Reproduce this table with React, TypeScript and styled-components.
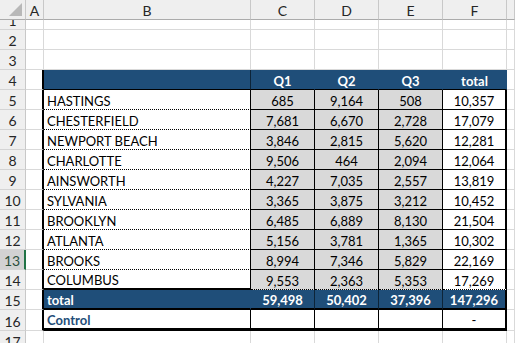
import React from 'react';
import styled, { createGlobalStyle } from 'styled-components';

const NAVY = '#1f4e79';
const GRID = '#d9d9d9';
const COLS = '26px 18px 207px 64px 64px 64px 64px 1fr';

const GlobalStyle = createGlobalStyle`
  html, body {
    margin: 0;
    padding: 0;
    background: #ffffff;
    overflow: hidden;
  }
  body {
    font-family: Lato, "Open Sans", "Liberation Sans", sans-serif;
    font-size: 13px;
  }
`;

const Sheet = styled.div`
  width: 515px;
  height: 343px;
  overflow: hidden;
  background: #ffffff;
`;

const Row = styled.div<{ $h: number }>`
  display: grid;
  grid-template-columns: ${COLS};
  height: ${(p) => p.$h}px;
`;

const Corner = styled.div`
  background: #efefef;
  border-right: 1px solid #c8c8c8;
  border-bottom: 1px solid #ababab;
  display: flex;
  align-items: flex-end;
  justify-content: flex-end;
  padding: 0 3px 3px 0;
`;

const ColHead = styled.div`
  box-sizing: border-box;
  background: #efefef;
  border-right: 1px solid #c8c8c8;
  border-bottom: 1px solid #ababab;
  color: #262626;
  font-size: 14px;
  display: flex;
  align-items: center;
  justify-content: center;
  padding-top: 1px;
`;

const RowHead = styled.div<{ $active?: boolean }>`
  box-sizing: border-box;
  background: ${(p) => (p.$active ? '#d2d2d2' : '#efefef')};
  border-right: ${(p) => (p.$active ? '2px solid #217346' : '1px solid #c8c8c8')};
  border-bottom: 1px solid #d4d4d4;
  color: ${(p) => (p.$active ? '#2b4f3b' : '#262626')};
  font-size: 14px;
  display: flex;
  align-items: flex-end;
  justify-content: center;
  overflow: hidden;
  line-height: 17px;
`;

type CellProps = {
  $bg?: string;
  $color?: string;
  $bold?: boolean;
  $center?: boolean;
  $rb?: string;
  $bb?: string;
};

const Cell = styled.div<CellProps>`
  box-sizing: border-box;
  background: ${(p) => p.$bg || '#ffffff'};
  color: ${(p) => p.$color || '#000000'};
  font-weight: ${(p) => (p.$bold ? 700 : 400)};
  border-right: ${(p) => p.$rb || `1px solid ${GRID}`};
  border-bottom: ${(p) => p.$bb || `1px solid ${GRID}`};
  display: flex;
  align-items: flex-end;
  justify-content: ${(p) => (p.$center ? 'center' : 'flex-start')};
  padding: 0 3px;
  line-height: 16px;
  white-space: nowrap;
  overflow: hidden;
`;

const data: [string, number, number, number][] = [
  ['HASTINGS', 685, 9164, 508],
  ['CHESTERFIELD', 7681, 6670, 2728],
  ['NEWPORT BEACH', 3846, 2815, 5620],
  ['CHARLOTTE', 9506, 464, 2094],
  ['AINSWORTH', 4227, 7035, 2557],
  ['SYLVANIA', 3365, 3875, 3212],
  ['BROOKLYN', 6485, 6889, 8130],
  ['ATLANTA', 5156, 3781, 1365],
  ['BROOKS', 8994, 7346, 5829],
  ['COLUMBUS', 9553, 2363, 5353],
];

const fmt = (n: number) => n.toLocaleString('en-US');

const BLACK = '1px solid #000';
const EDGE = '2px solid #000';
const THICK = '3px solid #000';
const DOTS = '1px dotted #000';

const CornerMark = () => (
  <svg width="13" height="13" viewBox="0 0 13 13">
    <polygon points="13,0 13,13 0,13" fill="#b8b8b8" />
  </svg>
);

export default function App() {
  const totals = [0, 1, 2].map((i) => data.reduce((s, r) => s + (r[i + 1] as number), 0));
  const grand = totals.reduce((a, b) => a + b, 0);

  const empty = (n: number, h: number) => (
    <Row $h={h} key={`e${n}`}>
      <RowHead>{n}</RowHead>
      <Cell />
      <Cell />
      <Cell />
      <Cell />
      <Cell />
      <Cell />
      <Cell />
    </Row>
  );

  return (
    <Sheet>
      <GlobalStyle />
      <Row $h={20}>
        <Corner>
          <CornerMark />
        </Corner>
        {['A', 'B', 'C', 'D', 'E', 'F', ''].map((c) => (
          <ColHead key={c || 'g'}>{c}</ColHead>
        ))}
      </Row>

      {empty(1, 10)}
      {empty(2, 20)}
      {empty(3, 20)}

      <Row $h={20}>
        <RowHead>4</RowHead>
        <Cell $rb={EDGE} />
        <Cell $bg={NAVY} $rb="1px solid #0d2438" $bb={BLACK} />
        {['Q1', 'Q2', 'Q3', 'total'].map((q) => (
          <Cell key={q} $bg={NAVY} $color="#fff" $bold $center $rb={`1px solid ${NAVY}`} $bb={BLACK}>
            {q}
          </Cell>
        ))}
        <Cell />
      </Row>

      {data.map((r, i) => {
        const last = i === data.length - 1;
        const sum = r[1] + r[2] + r[3];
        return (
          <Row $h={20} key={r[0]}>
            <RowHead $active={i + 5 === 13}>{i + 5}</RowHead>
            <Cell $rb={EDGE} />
            <Cell $rb={BLACK} $bb={last ? EDGE : DOTS}>
              {r[0]}
            </Cell>
            {[r[1], r[2], r[3]].map((v, j) => (
              <Cell key={j} $bg="#d9d9d9" $center $rb={BLACK} $bb={last ? DOTS : BLACK}>
                {fmt(v)}
              </Cell>
            ))}
            <Cell $center $rb={EDGE} $bb={last ? DOTS : BLACK}>
              {fmt(sum)}
            </Cell>
            <Cell />
          </Row>
        );
      })}

      <Row $h={20}>
        <RowHead>15</RowHead>
        <Cell $rb={EDGE} />
        <Cell $bg={NAVY} $color="#fff" $bold $rb={`1px solid ${NAVY}`} $bb={EDGE}>
          total
        </Cell>
        {[...totals, grand].map((v, j) => (
          <Cell key={j} $bg={NAVY} $color="#fff" $bold $center $rb={j === 3 ? EDGE : '1px solid #0d2438'} $bb={EDGE}>
            {fmt(v)}
          </Cell>
        ))}
        <Cell />
      </Row>

      <Row $h={21}>
        <RowHead>16</RowHead>
        <Cell $rb={EDGE} />
        <Cell $color={NAVY} $bold $rb={BLACK} $bb={THICK}>
          Control
        </Cell>
        <Cell $rb={BLACK} $bb={THICK} />
        <Cell $rb={BLACK} $bb={THICK} />
        <Cell $rb={BLACK} $bb={THICK} />
        <Cell $center $rb={EDGE} $bb={THICK}>
          -
        </Cell>
        <Cell />
      </Row>

      {empty(17, 20)}
    </Sheet>
  );
}
